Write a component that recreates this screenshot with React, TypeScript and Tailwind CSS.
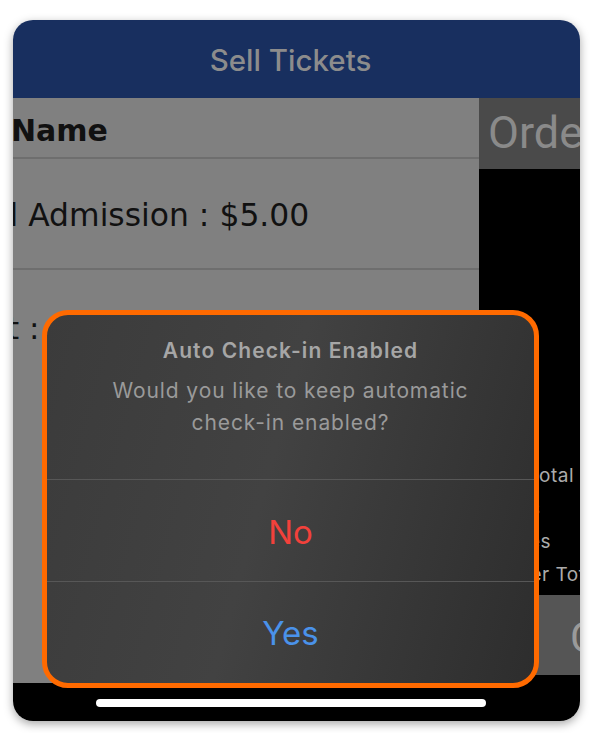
import React from "react";

export default function App() {
  const dv = { fontFamily: '"DejaVu Sans", Verdana, sans-serif' };
  const inter = { fontFamily: 'Inter, "Noto Sans", sans-serif' };
  const roboto = { fontFamily: 'Roboto, "Noto Sans", sans-serif' };
  return (
    <div className="w-[591px] h-[733px] bg-white pt-[20px] pl-[13px]">
      <div className="relative w-[567px] h-[701px] rounded-[20px] overflow-hidden flex flex-col shadow-[0_3px_10px_rgba(0,0,0,0.35)]">
        {/* Header */}
        <div
          className="h-[78px] shrink-0 bg-[#182f5f] flex items-center justify-center text-[29.5px] font-medium text-[#8c8c8c] pt-[3px] pr-[12px]"
          style={inter}
        >
          Sell Tickets
        </div>

        {/* Body */}
        <div className="h-[585px] shrink-0 flex">
          {/* Left list */}
          <div className="w-[466px] shrink-0 bg-[#808080] overflow-hidden whitespace-nowrap flex flex-col" style={dv}>
            <div className="h-[59px] flex items-center pt-[5px] ml-[-2px] text-[30px] font-bold text-[#111]">
              Name
            </div>
            <div className="h-[2px] bg-[#6e6e6e]" />
            <div className="h-[109px] flex items-center pt-[4px] ml-[-3.5px] text-[31.4px] text-[#111]">
              l Admission : $5.00
            </div>
            <div className="h-[2px] bg-[#6e6e6e]" />
            <div className="h-[120px] flex items-center ml-[-6px] pb-[4px] text-[31px] text-[#111]">
              t : $3.00
            </div>
          </div>

          {/* Right order summary */}
          <div className="flex-1 flex flex-col overflow-hidden whitespace-nowrap">
            <div className="h-[71px] shrink-0 bg-[#4a4a4a] flex items-center pl-[9px] text-[45px] text-[#8a8a8a] pb-[1px]" style={roboto}>
              Order Summary
            </div>
            <div
              className="h-[426px] shrink-0 bg-black flex flex-col pt-[290px] pl-[17px] text-[19px] leading-[33px] tracking-[0.5px] text-[#ababab]"
              style={inter}
            >
              <div>Subtotal</div>
              <div>Fees</div>
              <div>Taxes</div>
              <div>Order Total</div>
            </div>
            <div className="h-[80px] shrink-0 bg-[#555555] flex items-center pl-[91px] text-[42px] text-[#9a9a9a] pt-[4px]" style={roboto}>
              Charge
            </div>
            <div className="flex-1 bg-black" />
          </div>
        </div>

        {/* Bottom bar with home indicator */}
        <div className="flex-1 bg-black pt-[16px]">
          <div className="ml-[83px] w-[390px] h-[8px] rounded-full bg-white" />
        </div>

        {/* Alert dialog overlay */}
        <div
          className="absolute left-[29px] top-[290px] w-[497px] h-[378px] rounded-[26px] border-[5px] border-[#ff6a00] overflow-hidden bg-[linear-gradient(105deg,#3b3b3b_0%,#424242_45%,#2d2d2d_100%)] flex flex-col"
          style={inter}
        >
          <div className="h-[164px] shrink-0 flex flex-col items-center pt-[24px] text-center">
            <div className="text-[21px] leading-[24px] font-semibold tracking-[1.1px] text-[#a6a6a6]">Auto Check-in Enabled</div>
            <div className="mt-[12px] text-[21px] leading-[32px] tracking-[0.9px] text-[#9a9a9a]">
              Would you like to keep automatic
              <br />
              check-in enabled?
            </div>
          </div>
          <div className="h-[1px] bg-[#575757]" />
          <div className="h-[101px] shrink-0 flex items-center justify-center pt-[4px] text-[33px] text-[#f2413b]">No</div>
          <div className="h-[1px] bg-[#575757]" />
          <div className="flex-1 flex items-center justify-center pt-[3px] text-[33px] text-[#4a92ea]">Yes</div>
        </div>
      </div>
    </div>
  );
}
